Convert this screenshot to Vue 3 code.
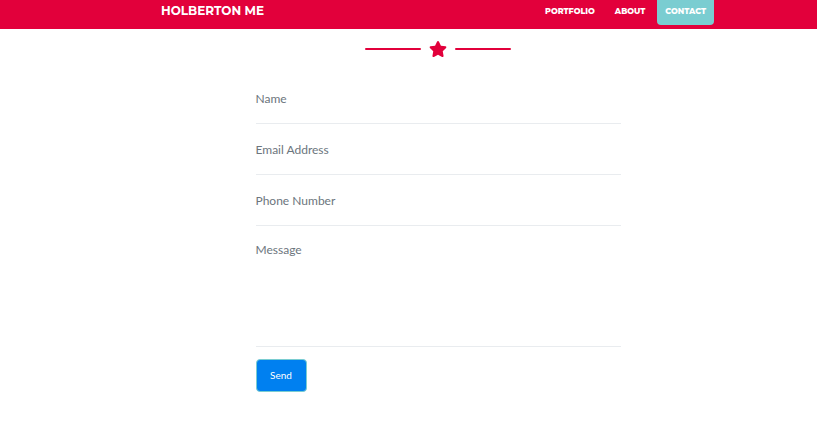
<script setup>
import { reactive } from 'vue'

const links = [
  { text: 'Portfolio', href: '#portfolio' },
  { text: 'About', href: '#about' },
  { text: 'Contact', href: '#contact', active: true },
]

const fields = [
  { id: 'name', label: 'Name', type: 'text' },
  { id: 'email', label: 'Email Address', type: 'email' },
  { id: 'phone', label: 'Phone Number', type: 'tel' },
]

const form = reactive({ name: '', email: '', phone: '', message: '' })
</script>

<template>
  <div class="page">
    <header class="navbar">
      <nav class="nav-inner">
        <a class="brand" href="#top">Holberton Me</a>
        <ul class="links">
          <li v-for="link in links" :key="link.text">
            <a class="link" :class="{ active: link.active }" :href="link.href">{{ link.text }}</a>
          </li>
        </ul>
      </nav>
    </header>

    <main id="contact" class="contact">
      <div class="divider">
        <span class="divider-line"></span>
        <svg class="star" viewBox="0 0 576 512" aria-hidden="true">
          <path d="M259.3 17.8L194 150.2 47.9 171.5c-26.2 3.8-36.7 36.1-17.7 54.6l105.7 103-25 145.5c-4.5 26.3 23.2 46 46.4 33.7L288 439.6l130.7 68.7c23.2 12.2 50.9-7.4 46.4-33.7l-25-145.5 105.7-103c19-18.5 8.5-50.8-17.7-54.6L382 150.2 316.7 17.8c-11.7-23.6-45.6-23.9-57.4 0z" />
        </svg>
        <span class="divider-line"></span>
      </div>

      <form class="form" @submit.prevent>
        <div v-for="field in fields" :key="field.id" class="group">
          <input :id="field.id" v-model="form[field.id]" class="control" :type="field.type" />
          <label class="label" :class="{ filled: form[field.id] }" :for="field.id">{{ field.label }}</label>
        </div>
        <div class="group">
          <textarea id="message" v-model="form.message" class="control message" rows="5"></textarea>
          <label class="label" :class="{ filled: form.message }" for="message">Message</label>
        </div>
        <button class="send" type="submit">Send</button>
      </form>
    </main>
  </div>
</template>

<style>
body {
  background: #fff;
}
</style>

<style scoped>
.page,
.page * {
  box-sizing: border-box;
}

.page {
  font-family: Lato, "Liberation Sans", sans-serif;
  color: #6c757d;
}

.navbar {
  padding: 0 0 4px 58px;
  background: #e2003b;
}

.nav-inner {
  display: flex;
  align-items: center;
  justify-content: space-between;
  max-width: 553px;
  margin: 0 auto;
  font-family: Montserrat, Inter, sans-serif;
  text-transform: uppercase;
}

.brand {
  padding-bottom: 3px;
  color: #fff;
  font-size: 12px;
  line-height: 20px;
  font-weight: 700;
  text-decoration: none;
}

.links {
  display: flex;
  gap: 4px;
  margin: 0;
  padding: 0;
  list-style: none;
}

.link {
  display: block;
  padding: 5px 8px 8px;
  border-radius: 0 0 4px 4px;
  color: #fff;
  font-size: 8px;
  line-height: 12px;
  font-weight: 800;
  text-decoration: none;
}

.link.active {
  background: #7acdd1;
}

.contact {
  padding: 12px 0 40px 59px;
}

.divider {
  display: flex;
  align-items: center;
  justify-content: center;
  gap: 8px;
}

.divider-line {
  width: 56px;
  height: 2px;
  border-radius: 2px;
  background: #e2003b;
}

.star {
  width: 18px;
  height: 16px;
  fill: #e2003b;
}

.form {
  max-width: 365px;
  margin: 16px auto 0;
}

/* The label shares the field's grid cell and shows until the field is filled. */
.group {
  display: grid;
  border-bottom: 1px solid #e9ecef;
}

.control,
.label {
  grid-area: 1 / 1;
  padding: 17px 0 15px;
  font-size: 12px;
  line-height: 18px;
}

.control {
  width: 100%;
  height: 50px;
  margin: 0;
  border: 0;
  outline: 0;
  background: transparent;
  color: #2c3e50;
  font-family: inherit;
}

.label {
  pointer-events: none;
}

.label.filled {
  visibility: hidden;
}

.message {
  height: 120px;
  resize: none;
}

.message,
.message + .label {
  padding-top: 15px;
}

.send {
  display: block;
  min-width: 51px;
  margin-top: 12px;
  padding: 8px 13px;
  border: 1px solid #7acdd1;
  border-radius: 4px;
  background: #0080f0;
  color: #fff;
  font-family: inherit;
  font-size: 10px;
  line-height: 15px;
  cursor: pointer;
}
</style>
